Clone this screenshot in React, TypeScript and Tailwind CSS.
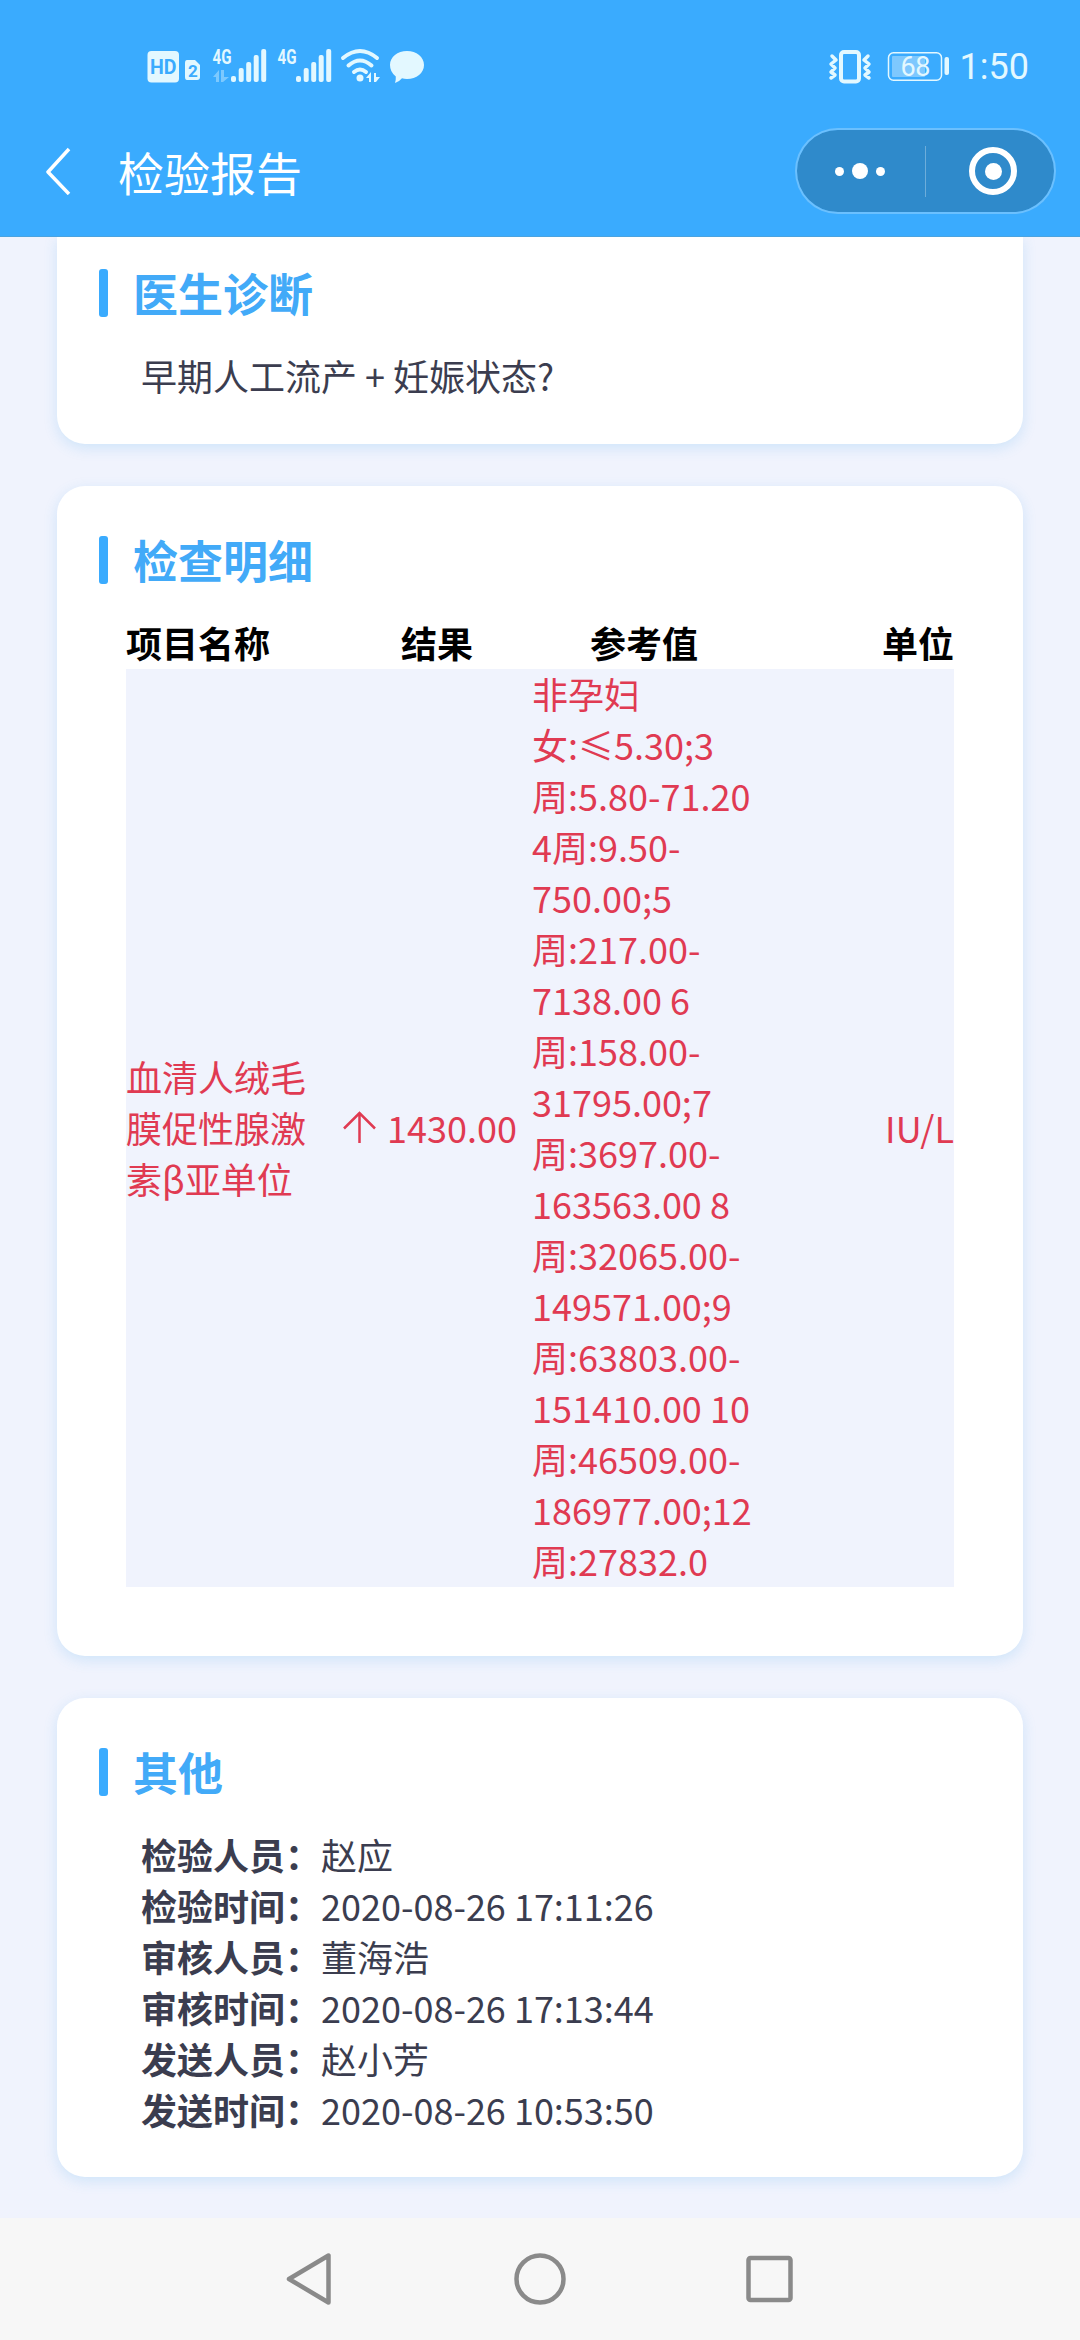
import { ReactNode } from 'react';

const referenceLines = [
    '非孕妇',
    '女:≤5.30;3',
    '周:5.80-71.20',
    '4周:9.50-',
    '750.00;5',
    '周:217.00-',
    '7138.00 6',
    '周:158.00-',
    '31795.00;7',
    '周:3697.00-',
    '163563.00 8',
    '周:32065.00-',
    '149571.00;9',
    '周:63803.00-',
    '151410.00 10',
    '周:46509.00-',
    '186977.00;12',
    '周:27832.0',
];

const nameLines = ['血清人绒毛', '膜促性腺激', '素β亚单位'];

const others = [
    { label: '检验人员：', value: '赵应' },
    { label: '检验时间：', value: '2020-08-26 17:11:26' },
    { label: '审核人员：', value: '董海浩' },
    { label: '审核时间：', value: '2020-08-26 17:13:44' },
    { label: '发送人员：', value: '赵小芳' },
    { label: '发送时间：', value: '2020-08-26 10:53:50' },
];

function SignalBars({ x }: { x: number }) {
    return (
        <g transform={`translate(${x} 0)`}>
            <text x="-0.5" y="24" fontSize="21" fontWeight="700" textLength="19" lengthAdjust="spacingAndGlyphs">
                4G
            </text>
            <rect x="18" y="36" width="5" height="6" rx="2" />
            <rect x="25.7" y="28" width="5" height="14" rx="2" />
            <rect x="33.2" y="22" width="5" height="20" rx="2" />
            <rect x="40.7" y="15" width="5" height="27" rx="2" />
            <rect x="48.2" y="9" width="5" height="33" rx="2" />
        </g>
    );
}

function StatusBar() {
    return (
        <div className="flex h-[106px] items-start justify-between pt-10 pr-[51px] pl-[147px] text-[#e3f8ff]">
            <svg width="280" height="50" viewBox="0 0 280 50" fill="currentColor" className="font-['Roboto',sans-serif]">
                <rect x="0.5" y="11" width="31.5" height="31.5" rx="4" />
                <text x="3" y="34" fontSize="21" fontWeight="700" fill="#3aabfe" textLength="26.5" lengthAdjust="spacingAndGlyphs">
                    HD
                </text>
                <path d="M40 20h8l5 5v12q0 3-3 3h-10q-2 0-2-3v-14q0-3 2-3z" />
                <text x="41" y="37" fontSize="17" fontWeight="700" fill="#3aabfe">
                    2
                </text>
                <SignalBars x={66} />
                <path d="M66 37l6-7v12h-3v-5zM74 30h3v7h5l-6 5h-2z" opacity=".4" />
                <SignalBars x={131} />
                <g fill="none" stroke="currentColor" strokeWidth="4" strokeLinecap="round">
                    <path d="M196 18q17-14 34 0" />
                    <path d="M201.5 25.5q11.5-10 23 0" />
                    <path d="M207 32q6-5 12 0" />
                </g>
                <circle cx="213" cy="38" r="3.5" />
                <path d="M219 38l5-6v10h-2v-4zM227 33h2v4h4l-4 5h-2z" />
                <path d="M260 11c9.5 0 17 6 17 14s-7.5 14-17 14q-3 0-5-.7-3 3.7-7 4.7 1-3 .8-6.5-5.8-4.5-5.8-11.5c0-8 7.5-14 17-14z" />
            </svg>
            <div className="flex items-start">
                <svg width="122" height="50" viewBox="0 0 122 50" fill="none" stroke="currentColor" className="font-['Roboto',sans-serif]">
                    <rect x="14" y="12" width="18" height="29.5" rx="3" strokeWidth="4" />
                    <path d="M5 16l4 4-5 4 4 4-4 4 4 3-4 3M41 16l-4 4 5 4-4 4 4 4-4 3 4 3" strokeWidth="3.5" strokeLinecap="round" strokeLinejoin="round" />
                    <rect x="61.5" y="12.7" width="53" height="27.6" rx="5" strokeWidth="1.5" />
                    <rect x="65" y="16" width="33" height="21" rx="1" fill="#fff" fillOpacity=".35" stroke="none" />
                    <rect x="117.5" y="17" width="4.5" height="18" rx="2" fill="currentColor" stroke="none" />
                    <text x="73.5" y="36" fontSize="27" fill="currentColor" stroke="none" textLength="30">
                        68
                    </text>
                </svg>
                <span className="ml-[11px] font-['Roboto',sans-serif] text-4xl leading-[54px]">1:50</span>
            </div>
        </div>
    );
}

function TitleBar() {
    return (
        <div className="flex flex-1 items-center pr-6 pl-[45px]">
            <svg width="26" height="48" viewBox="0 0 26 48" fill="none" stroke="white" strokeWidth="3.5" strokeLinejoin="round">
                <path d="M24 2L3 25L24 47" />
            </svg>
            <h1 className="ml-[47px] text-[46px] leading-none text-white">检验报告</h1>
            <div className="ml-auto flex h-[86px] w-[261px] items-center rounded-full border-2 border-white/25 bg-[#2f8acb] bg-clip-padding">
                <div className="flex w-32 items-center justify-center gap-2 pr-0.5">
                    <span className="size-[9px] rounded-full bg-white" />
                    <span className="size-4 rounded-full bg-white" />
                    <span className="size-[9px] rounded-full bg-white" />
                </div>
                <span className="h-[51px] w-px bg-white/30" />
                <div className="flex w-32 items-center justify-center pl-1.5">
                    <span className="flex size-12 items-center justify-center rounded-full border-6 border-white">
                        <span className="size-[17px] rounded-full bg-white" />
                    </span>
                </div>
            </div>
        </div>
    );
}

function Card({ title, className, children }: { title: string; className: string; children: ReactNode }) {
    return (
        <section className={`mx-[57px] bg-white shadow-[0_4px_14px_rgba(58,160,235,0.18)] ${className}`}>
            <div className="flex h-12 items-center pl-[42px]">
                <span className="h-12 w-[9px] rounded-[3px] bg-[#3aabfe]" />
                <h2 className="ml-[25px] pb-0.5 text-[45px] leading-none font-bold text-[#42aaf8]">{title}</h2>
            </div>
            {children}
        </section>
    );
}

function UpArrow() {
    return (
        <svg width="36" height="36" viewBox="0 0 36 36" fill="none" stroke="currentColor" strokeWidth="2.5">
            <path d="M17.5 34V5M2 19.5L17.5 4L33 19.5" />
        </svg>
    );
}

function DetailTable() {
    return (
        <table className="mt-[34px] ml-[69px] w-[828px] table-fixed border-collapse text-4xl leading-[51px]">
            <colgroup>
                <col className="w-[216px]" />
                <col className="w-[190px]" />
                <col className="w-[224px]" />
                <col className="w-[198px]" />
            </colgroup>
            <thead>
                <tr className="leading-[49px] text-black">
                    <th className="p-0 pb-0.5 text-left">项目名称</th>
                    <th className="p-0 pb-0.5">结果</th>
                    <th className="p-0 pb-0.5">参考值</th>
                    <th className="p-0 pb-0.5 text-right">单位</th>
                </tr>
            </thead>
            <tbody>
                <tr className="bg-[#f0f3fd] text-[#e03a52]">
                    <td className="p-0 pb-0.5">
                        {nameLines.map((line) => (
                            <div key={line}>{line}</div>
                        ))}
                    </td>
                    <td className="p-0 pb-0.5">
                        <div className="flex items-center gap-[9px] whitespace-nowrap">
                            <UpArrow />
                            1430.00
                        </div>
                    </td>
                    <td className="p-0 whitespace-nowrap">
                        <div className="-mt-px mb-px">
                            {referenceLines.map((line) => (
                                <div key={line}>{line}</div>
                            ))}
                        </div>
                    </td>
                    <td className="p-0 pb-0.5 text-right">IU/L</td>
                </tr>
            </tbody>
        </table>
    );
}

function NavigationBar() {
    return (
        <nav className="flex h-[122px] items-center justify-center gap-[174px] bg-[#f7f7f7]">
            <svg width="56" height="56" viewBox="0 0 56 56" fill="none" stroke="#8a8a8a" strokeWidth="4.5" strokeLinejoin="round">
                <path d="M46.5 4.5v47L7 28z" />
            </svg>
            <svg width="56" height="56" viewBox="0 0 56 56" fill="none" stroke="#8a8a8a" strokeWidth="4.5">
                <circle cx="28" cy="28" r="23.5" />
            </svg>
            <svg width="56" height="56" viewBox="0 0 56 56" fill="none" stroke="#8a8a8a" strokeWidth="4.5">
                <rect x="6.5" y="7" width="42" height="42" rx="2" />
            </svg>
        </nav>
    );
}

export default function App() {
    return (
        <div className="flex h-[2340px] w-[1080px] flex-col overflow-hidden bg-[#f0f3fd] font-['Noto_Sans_CJK_SC',sans-serif] text-[#3b3d4f]">
            <header className="flex h-[237px] shrink-0 flex-col border-b border-[#4ba3df] bg-[#3aabfe]">
                <StatusBar />
                <TitleBar />
            </header>

            <main className="flex-1 overflow-hidden">
                <Card title="医生诊断" className="h-[207px] rounded-b-[28px] pt-8">
                    <p className="mt-[33px] ml-[84px] text-4xl leading-[51px]">早期人工流产 + 妊娠状态?</p>
                </Card>

                <Card title="检查明细" className="mt-[42px] h-[1170px] rounded-[28px] pt-[50px]">
                    <DetailTable />
                </Card>

                <Card title="其他" className="mt-[42px] h-[479px] rounded-[28px] pt-[50px]">
                    <dl className="mt-[33px] ml-[84px] text-4xl leading-[51px]">
                        {others.map((item) => (
                            <div key={item.label} className="flex">
                                <dt className="font-bold">{item.label}</dt>
                                <dd>{item.value}</dd>
                            </div>
                        ))}
                    </dl>
                </Card>
            </main>

            <NavigationBar />
        </div>
    );
}
